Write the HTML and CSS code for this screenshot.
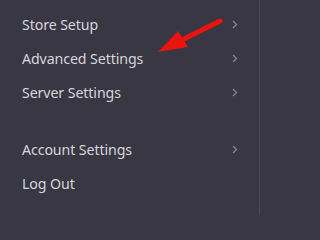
FILE: index.html
```html
<!DOCTYPE html>
<html>
<head>
<meta charset="utf-8">
<link rel="stylesheet" href="styles.css">
</head>
<body>
<div class="panel">
  <ul class="menu">
    <li class="item"><span class="label">Store Setup</span><svg class="chev" width="6" height="9" viewBox="0 0 6 9"><path d="M1 1 L4.5 4.5 L1 8" fill="none" stroke="#85848d" stroke-width="1.3"/></svg></li>
    <li class="item"><span class="label">Advanced Settings</span><svg class="chev" width="6" height="9" viewBox="0 0 6 9"><path d="M1 1 L4.5 4.5 L1 8" fill="none" stroke="#85848d" stroke-width="1.3"/></svg></li>
    <li class="item"><span class="label">Server Settings</span><svg class="chev" width="6" height="9" viewBox="0 0 6 9"><path d="M1 1 L4.5 4.5 L1 8" fill="none" stroke="#85848d" stroke-width="1.3"/></svg></li>
    <li class="item spaced"><span class="label">Account Settings</span><svg class="chev" width="6" height="9" viewBox="0 0 6 9"><path d="M1 1 L4.5 4.5 L1 8" fill="none" stroke="#85848d" stroke-width="1.3"/></svg></li>
    <li class="item"><span class="label">Log Out</span></li>
  </ul>
  <svg class="arrow" width="260" height="215" viewBox="0 0 260 215">
    <line x1="220" y1="21" x2="180" y2="41" stroke="#e8140f" stroke-width="5" stroke-linecap="round"/>
    <polygon points="158,52 178,31 188,47" fill="#e8140f"/>
  </svg>
</div>
</body>
</html>
```
FILE: styles.css
```css
html, body {
  margin: 0;
  padding: 0;
  background: #383743;
}
.panel {
  position: relative;
  width: 259px;
  height: 215px;
  background: #383743;
  border-right: 1px solid #4a4953;
  font-family: "Noto Sans", "DejaVu Sans", sans-serif;
}
.menu {
  list-style: none;
  margin: 0;
  padding: 7px 0 0 0;
}
.item {
  display: flex;
  align-items: center;
  justify-content: space-between;
  height: 34.3px;
  padding: 0 21px 0 22px;
  color: #d6d5db;
  font-size: 14.2px;
  letter-spacing: -0.1px;
}
.spaced {
  margin-top: 22px;
}
.chev {
  display: block;
}
.arrow {
  position: absolute;
  left: 0;
  top: 0;
  pointer-events: none;
}
```
